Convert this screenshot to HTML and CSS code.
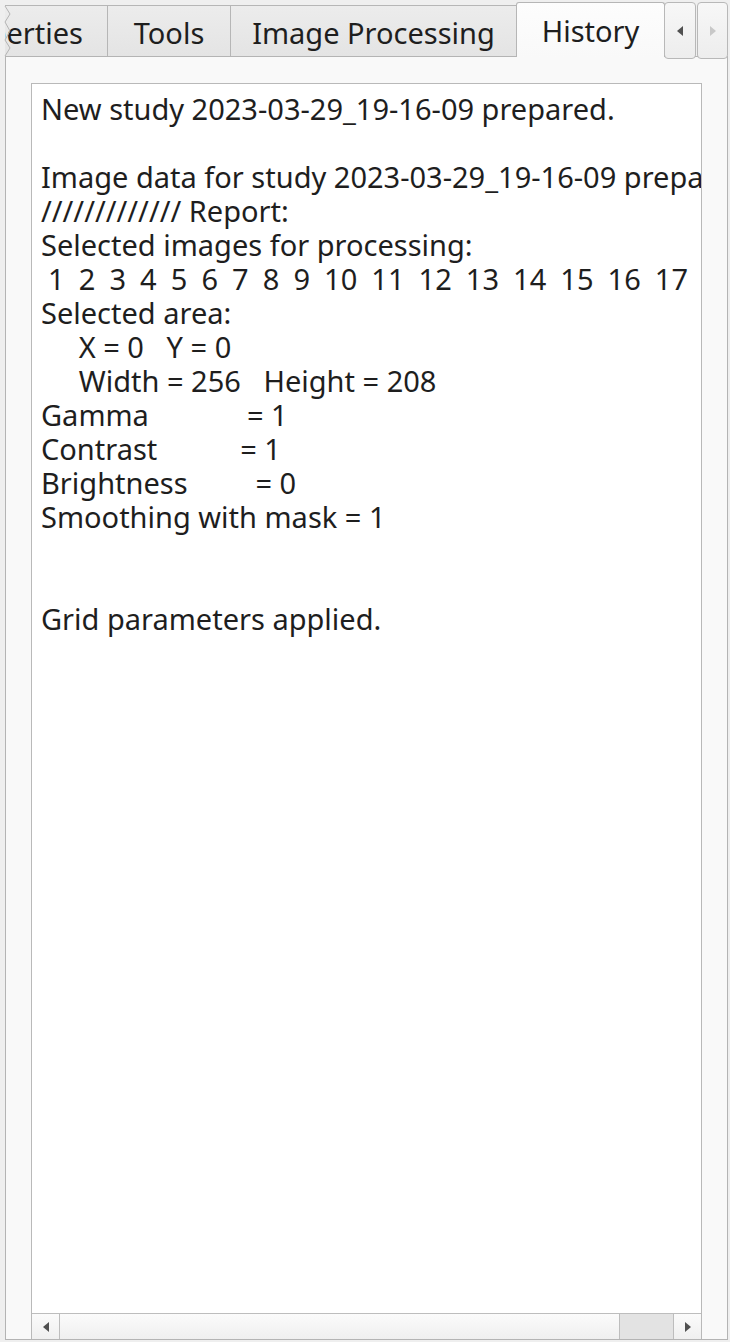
FILE: index.html
```html
<!DOCTYPE html>
<html>
<head>
<meta charset="utf-8">
<link rel="stylesheet" href="styles.css">
</head>
<body>
<div class="window">
  <div class="tabbar">
    <div class="tabs">
      <div class="tab t-props">Properties</div>
      <div class="tab t-tools">Tools</div>
      <div class="tab t-img">Image Processing</div>
      <div class="tab active">History</div>
    </div>
    <svg class="tear" width="8" height="50" viewBox="0 0 8 50"><path d="M1 0 L6 8 L1 16 L6 25 L1 34 L6 42 L1 50" fill="none" stroke="#b4b4b4" stroke-width="1"/></svg>
    <div class="scrollbtns">
      <div class="sbtn"><span class="tri left dark"></span></div>
      <div class="sbtn"><span class="tri right light"></span></div>
    </div>
  </div>
  <div class="pane">
    <div class="textarea">
      <div class="text">New study 2023-03-29_19-16-09 prepared.

Image data for study 2023-03-29_19-16-09 prepared.
///////////// Report:
Selected images for processing:
<span class="nums"> 1  2  3  4  5  6  7  8  9  10  11  12  13  14  15  16  17  18  19  20</span>
Selected area:
     X = 0   Y = 0
     Width = 256   Height = 208
Gamma             = 1
Contrast           = 1
Brightness         = 0
Smoothing with mask = 1


Grid parameters applied.</div>
      <div class="hscroll">
        <div class="hbtn"><span class="tri left dark"></span></div>
        <div class="htrack"><div class="hthumb"></div></div>
        <div class="hbtn rb"><span class="tri right dark"></span></div>
      </div>
    </div>
  </div>
</div>
</body>
</html>
```
FILE: styles.css
```css
html, body {
  margin: 0;
  padding: 0;
}
body {
  width: 730px;
  height: 1342px;
  overflow: hidden;
  background: #efefef;
  font-family: "Noto Sans", "Open Sans", sans-serif;
  color: #1e1e1e;
}
.window {
  position: relative;
  height: 1342px;
  display: flex;
  flex-direction: column;
}
.tabbar {
  position: relative;
  height: 56px;
  padding-left: 5px;
  flex: none;
}
.tabs {
  display: flex;
  align-items: flex-end;
  height: 57px;
  width: 660px;
  overflow: hidden;
  position: relative;
  z-index: 1;
}
.tab {
  flex: none;
  box-sizing: border-box;
  height: 51px;
  display: flex;
  align-items: center;
  justify-content: center;
  padding-top: 3px;
  font-size: 29px;
  background: linear-gradient(#ececec, #e4e4e4);
  border: 1px solid #b6b6b6;
  border-bottom: none;
  border-left: none;
  margin-bottom: 1px;
  white-space: nowrap;
}
.t-props {
  width: 220px;
  margin-left: -117px;
  justify-content: flex-end;
  padding-right: 24px;
}
.t-tools {
  width: 123px;
}
.t-img {
  width: 286px;
}
.tab.active {
  width: 149px;
  height: 55px;
  margin-bottom: 0;
  margin-left: -1px;
  background: linear-gradient(#fdfdfd, #f9f9f9);
  border-left: 1px solid #b6b6b6;
  border-radius: 3px 3px 0 0;
  padding-top: 0;
}
.tear {
  position: absolute;
  left: 4px;
  top: 6px;
  z-index: 2;
}
.scrollbtns {
  position: absolute;
  left: 664px;
  top: 2px;
  display: flex;
  gap: 1px;
  z-index: 3;
}
.sbtn {
  box-sizing: border-box;
  width: 32px;
  height: 57px;
  border: 1px solid #b8b8b8;
  border-radius: 4px;
  background: linear-gradient(#f7f7f7, #ededed);
  display: flex;
  align-items: center;
  justify-content: center;
}
.sbtn + .sbtn {
  width: 31px;
}
.tri {
  width: 0;
  height: 0;
  border-top: 5px solid transparent;
  border-bottom: 5px solid transparent;
}
.tri.left.dark { border-right: 6px solid #505050; }
.tri.right.dark { border-left: 6px solid #505050; }
.tri.right.light { border-left: 6px solid #c8c8c8; }
.pane {
  flex: 1;
  margin: 0 2px 2px 5px;
  border: 1px solid #b4b4b4;
  background: #f9f9f9;
  padding: 26px 25px 0 25px;
  display: flex;
  flex-direction: column;
  min-height: 0;
}
.textarea {
  flex: 1;
  display: flex;
  flex-direction: column;
  background: #fff;
  border: 1px solid #b9b9b9;
  border-bottom: none;
  min-height: 0;
}
.text {
  flex: 1;
  overflow: hidden;
  white-space: pre;
  font-size: 29px;
  line-height: 34px;
  padding: 8px 0 0 9px;
}
.nums {
  word-spacing: -0.5px;
}
.hscroll {
  flex: none;
  height: 25px;
  border-top: 1px solid #bdbdbd;
  display: flex;
  background: linear-gradient(#fbfbfb, #efefef);
}
.hbtn {
  width: 27px;
  border-right: 1px solid #bdbdbd;
  display: flex;
  align-items: center;
  justify-content: center;
}
.hbtn.rb {
  border-right: none;
  border-left: 1px solid #bdbdbd;
}
.htrack {
  flex: 1;
  display: flex;
  justify-content: flex-end;
}
.hthumb {
  width: 53px;
  background: #e3e3e3;
  border-left: 1px solid #bdbdbd;
}
```
